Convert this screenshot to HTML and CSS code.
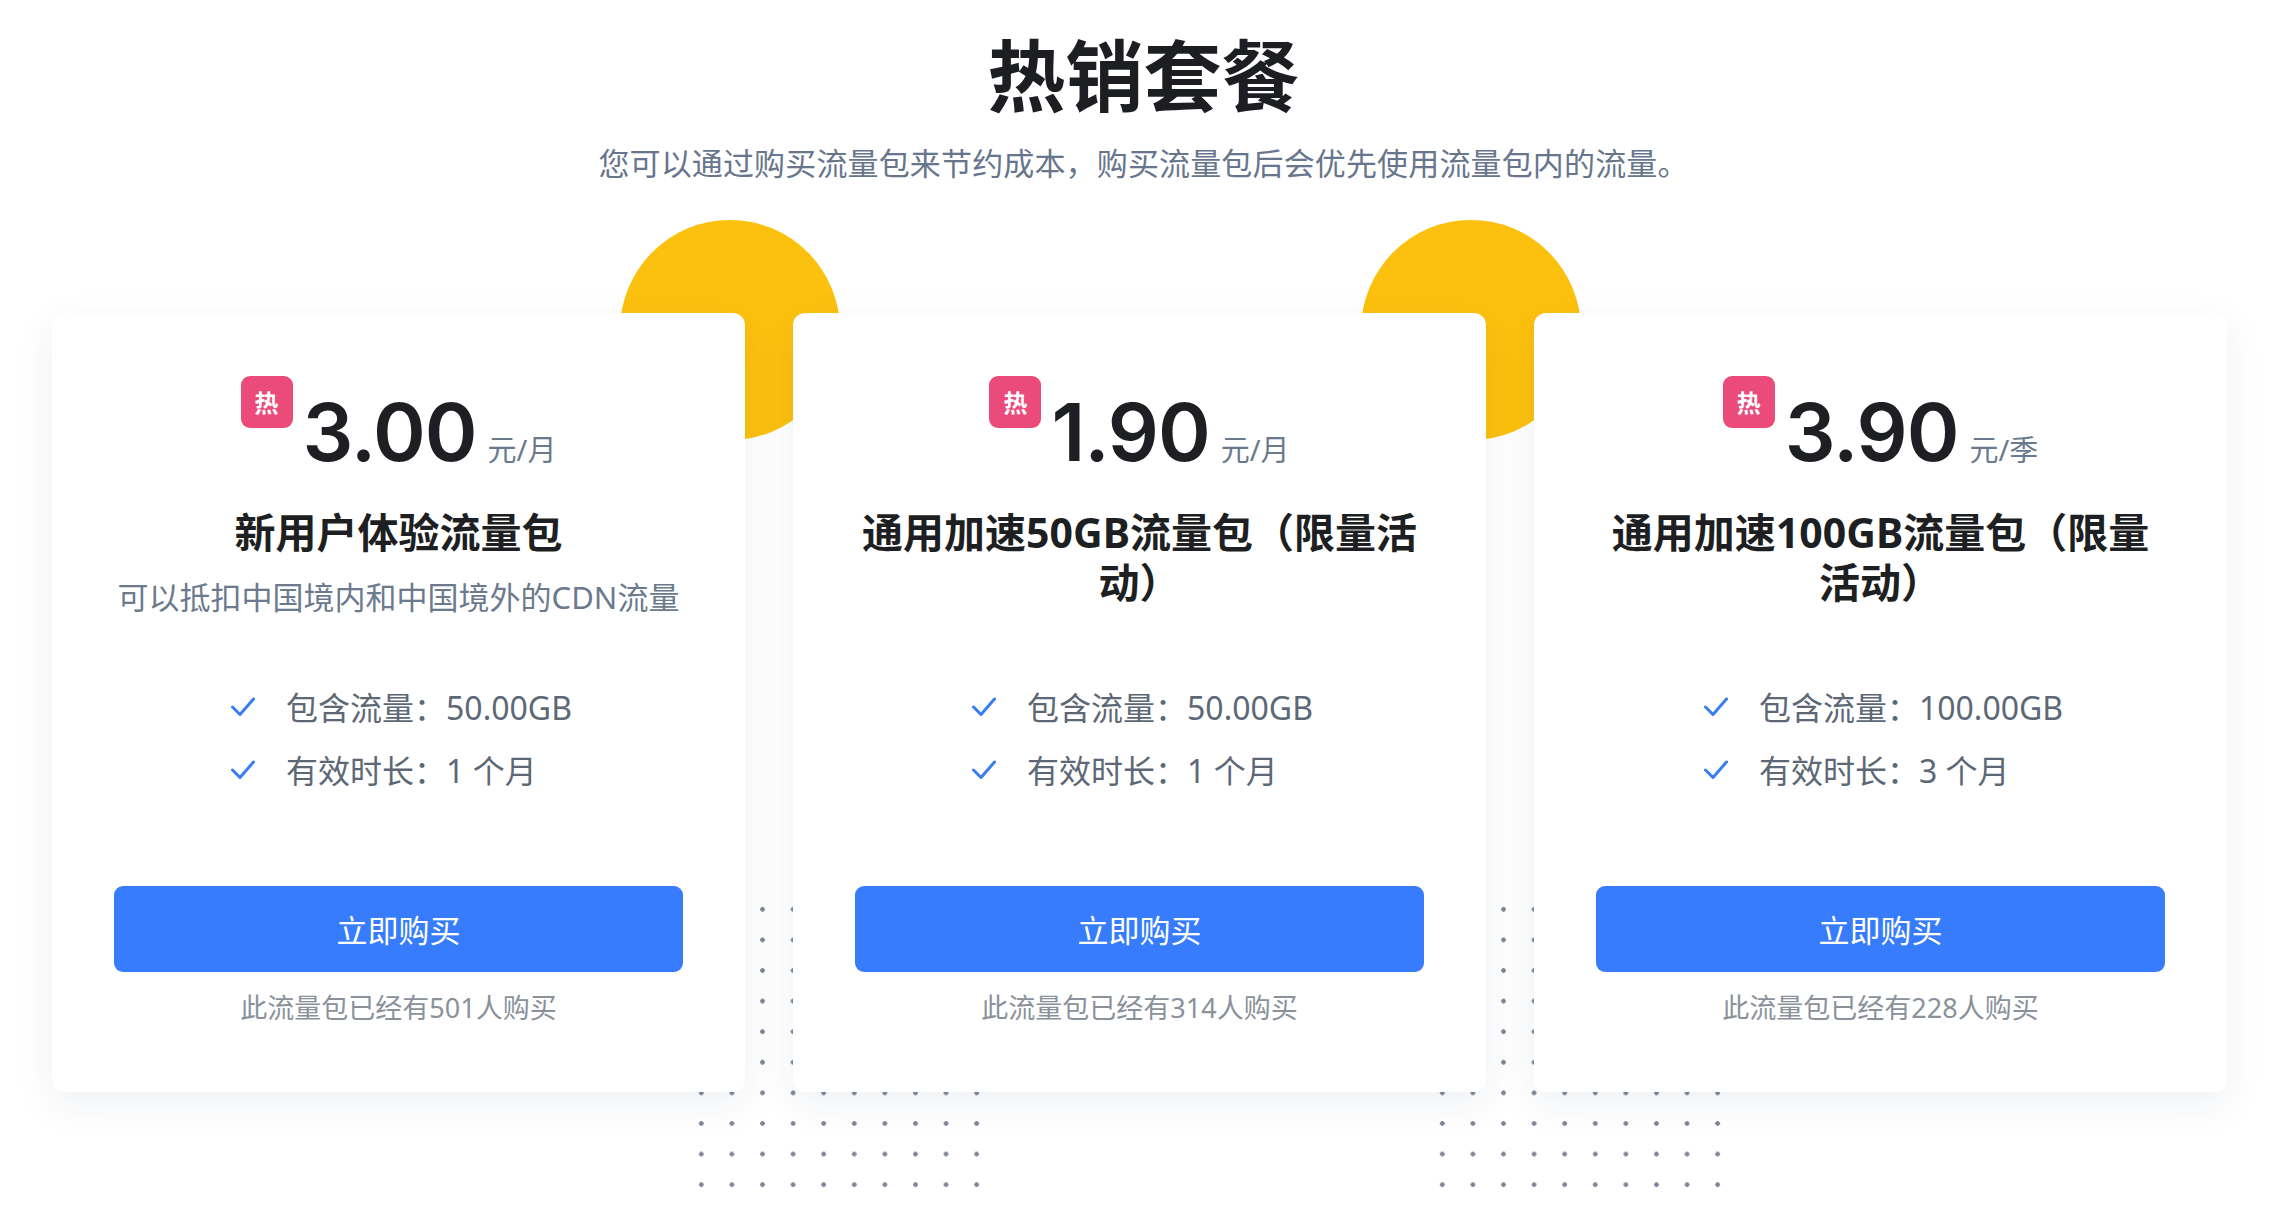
FILE: index.html
```html
<!DOCTYPE html>
<html lang="zh-CN">
<head>
<meta charset="utf-8">
<title>热销套餐</title>
<link rel="stylesheet" href="styles.css">
</head>
<body>
<div class="page">
  <header class="hero">
    <h1 class="hero-title">热销套餐</h1>
    <p class="hero-sub">您可以通过购买流量包来节约成本，购买流量包后会优先使用流量包内的流量。</p>
  </header>

  <section class="plans">
    <div class="deco-circle circle-a"></div>
    <div class="deco-circle circle-b"></div>
    <div class="deco-dots dots-a"></div>
    <div class="deco-dots dots-b"></div>

    <article class="card">
      <div class="price-row">
        <span class="badge">热</span>
        <div class="amount-group"><span class="amount">3.00</span><span class="unit">元/月</span></div>
      </div>
      <div class="card-head">
        <h2 class="plan-title">新用户体验流量包</h2>
        <p class="plan-desc">可以抵扣中国境内和中国境外的CDN流量</p>
      </div>
      <ul class="features">
        <li class="feature"><svg class="check" viewBox="0 0 24 20"><polyline points="1.5,10 9,17.5 22.5,2"/></svg><span>包含流量：50.00GB</span></li>
        <li class="feature"><svg class="check" viewBox="0 0 24 20"><polyline points="1.5,10 9,17.5 22.5,2"/></svg><span>有效时长：1 个月</span></li>
      </ul>
      <button class="buy">立即购买</button>
      <p class="sold">此流量包已经有501人购买</p>
    </article>

    <article class="card">
      <div class="price-row">
        <span class="badge">热</span>
        <div class="amount-group"><span class="amount">1.90</span><span class="unit">元/月</span></div>
      </div>
      <div class="card-head">
        <h2 class="plan-title">通用加速50GB流量包（限量活动）</h2>
      </div>
      <ul class="features">
        <li class="feature"><svg class="check" viewBox="0 0 24 20"><polyline points="1.5,10 9,17.5 22.5,2"/></svg><span>包含流量：50.00GB</span></li>
        <li class="feature"><svg class="check" viewBox="0 0 24 20"><polyline points="1.5,10 9,17.5 22.5,2"/></svg><span>有效时长：1 个月</span></li>
      </ul>
      <button class="buy">立即购买</button>
      <p class="sold">此流量包已经有314人购买</p>
    </article>

    <article class="card">
      <div class="price-row">
        <span class="badge">热</span>
        <div class="amount-group"><span class="amount">3.90</span><span class="unit">元/季</span></div>
      </div>
      <div class="card-head">
        <h2 class="plan-title">通用加速100GB流量包（限量活动）</h2>
      </div>
      <ul class="features">
        <li class="feature"><svg class="check" viewBox="0 0 24 20"><polyline points="1.5,10 9,17.5 22.5,2"/></svg><span>包含流量：100.00GB</span></li>
        <li class="feature"><svg class="check" viewBox="0 0 24 20"><polyline points="1.5,10 9,17.5 22.5,2"/></svg><span>有效时长：3 个月</span></li>
      </ul>
      <button class="buy">立即购买</button>
      <p class="sold">此流量包已经有228人购买</p>
    </article>
  </section>
</div>
</body>
</html>
```

FILE: styles.css
```css
* { box-sizing: border-box; }

html, body {
  margin: 0;
  padding: 0;
  background: #ffffff;
}

body {
  font-family: "Noto Sans", "Noto Sans CJK SC", sans-serif;
  color: #1f2023;
  overflow: hidden;
}

.page {
  width: 2287px;
  height: 1211px;
  overflow: hidden;
}

.hero {
  padding-top: 26px;
  text-align: center;
}

.hero-title {
  margin: 0;
  font-family: "Noto Sans CJK SC", sans-serif;
  font-size: 78px;
  line-height: 1.2;
  font-weight: 700;
  color: #1d1e21;
}

.hero-sub {
  margin: 21px 0 0;
  font-size: 31px;
  line-height: 45px;
  letter-spacing: 0.15px;
  color: #67768c;
}

.plans {
  position: relative;
  margin: 127px 0 0 52px;
  width: 2175px;
  display: flex;
  gap: 48px;
}

.deco-circle {
  position: absolute;
  top: -93px;
  width: 220px;
  height: 220px;
  border-radius: 50%;
  background: #fcc10e;
  z-index: 0;
}

.circle-a { left: 568px; }
.circle-b { left: 1309px; }

.deco-dots {
  position: absolute;
  top: 581px;
  width: 306px;
  height: 306px;
  background-image: radial-gradient(circle, #7e8698 2px, rgba(126, 134, 152, 0) 2.6px);
  background-size: 30.6px 30.6px;
  z-index: 0;
}

.dots-a { left: 634px; }
.dots-b { left: 1375px; }

.card {
  position: relative;
  z-index: 1;
  width: 693px;
  height: 779px;
  padding: 63px 62px 0;
  background: #ffffff;
  border-radius: 12px;
  box-shadow: 0 12px 40px rgba(20, 36, 80, 0.07);
  display: flex;
  flex-direction: column;
}

.price-row {
  display: flex;
  justify-content: center;
  align-items: flex-start;
  gap: 10px;
}

.badge {
  width: 52px;
  height: 52px;
  border-radius: 9px;
  background: #ea4b7b;
  color: #ffffff;
  font-family: "Noto Sans CJK SC", sans-serif;
  font-size: 24px;
  font-weight: 700;
  line-height: 1;
  display: flex;
  align-items: center;
  justify-content: center;
}

.amount-group {
  margin-top: 16px;
  display: flex;
  align-items: baseline;
  gap: 11px;
}

.amount {
  font-family: Inter, "Noto Sans", sans-serif;
  font-size: 80px;
  font-weight: 600;
  line-height: 80px;
  letter-spacing: -1px;
  color: #1e1f22;
}

.unit {
  font-size: 29px;
  line-height: 1;
  color: #6a7a8e;
}

.card-head {
  margin-top: 35px;
  min-height: 114px;
  text-align: center;
}

.plan-title {
  margin: 0;
  font-size: 41px;
  line-height: 50px;
  font-weight: 700;
  color: #1e1f22;
}

.plan-desc {
  margin: 18px 0 0;
  font-size: 31px;
  line-height: 45px;
  color: #6b7a8d;
  white-space: nowrap;
}

.features {
  list-style: none;
  margin: 64px auto 0;
  padding: 0 0 0 6px;
  width: fit-content;
  display: flex;
  flex-direction: column;
  gap: 18px;
}

.feature {
  display: flex;
  align-items: center;
  gap: 31px;
  font-size: 32px;
  line-height: 45px;
  color: #5d6876;
  white-space: nowrap;
}

.check {
  width: 24px;
  height: 20px;
  fill: none;
  stroke: #3a7cf2;
  stroke-width: 3;
  stroke-linecap: round;
  stroke-linejoin: round;
  flex: none;
}

.buy {
  margin-top: 93px;
  height: 86px;
  width: 100%;
  border: 0;
  border-radius: 9px;
  background: #377cfc;
  color: #ffffff;
  font-family: "Noto Sans CJK SC", "Noto Sans", sans-serif;
  font-size: 31px;
  line-height: 1;
  cursor: pointer;
}

.sold {
  margin: 18px 0 0;
  text-align: center;
  font-size: 27px;
  line-height: 36px;
  color: #8a919b;
}
```
